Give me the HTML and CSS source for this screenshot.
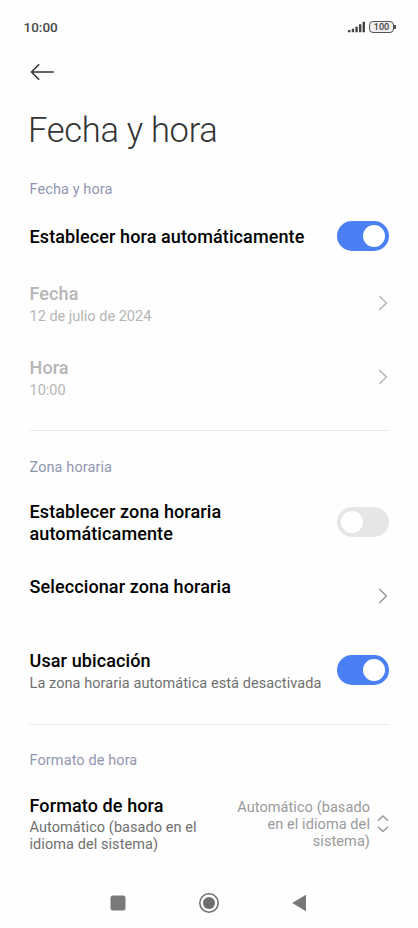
FILE: index.html
```html
<!DOCTYPE html>
<html lang="es">
<head>
<meta charset="utf-8">
<title>Fecha y hora</title>
<link rel="stylesheet" href="styles.css">
</head>
<body>
<div class="status">
  <span class="clock">10:00</span>
  <svg class="signal" width="18" height="12" viewBox="0 0 18 12"><path d="M0 9h2.4v2.3H0zM3.7 7.7h2.4v3.6H3.7zM7.4 5.7h2.4v5.6H7.4zM11 3.2h2.4v8.1H11zM14.6.8H17v10.5h-2.4z" fill="#444"/></svg>
  <span class="battery">100</span>
</div>
<header class="bar">
  <svg width="26" height="18" viewBox="0 0 26 18" fill="none" stroke="#333" stroke-width="1.6" stroke-linecap="round" stroke-linejoin="round"><path d="M24.2 9H2.500M9.700 1.7 2.500 9l7.200 7.2"/></svg>
</header>
<h1>Fecha y hora</h1>
<main>
  <section>
    <h2>Fecha y hora</h2>
    <div class="row short">
      <div class="text"><div class="name">Establecer hora automáticamente</div></div>
      <span class="switch on"></span>
    </div>
    <div class="row disabled">
      <div class="text"><div class="name">Fecha</div><div class="sub">12 de julio de 2024</div></div>
      <svg class="chevron" width="10" height="16" viewBox="0 0 10 16"><path d="M1.2 1 8.400 8l-7.200 7"/></svg>
    </div>
    <div class="row disabled">
      <div class="text"><div class="name">Hora</div><div class="sub">10:00</div></div>
      <svg class="chevron" width="10" height="16" viewBox="0 0 10 16"><path d="M1.2 1 8.400 8l-7.200 7"/></svg>
    </div>
  </section>
  <section>
    <h2>Zona horaria</h2>
    <div class="row zone">
      <div class="text"><div class="name">Establecer zona horaria automáticamente</div></div>
      <span class="switch"></span>
    </div>
    <div class="row">
      <div class="text"><div class="name">Seleccionar zona horaria</div><div class="sub"></div></div>
      <svg class="chevron" width="10" height="16" viewBox="0 0 10 16"><path d="M1.2 1 8.400 8l-7.200 7"/></svg>
    </div>
    <div class="row">
      <div class="text"><div class="name">Usar ubicación</div><div class="sub">La zona horaria automática está desactivada</div></div>
      <span class="switch on"></span>
    </div>
  </section>
  <section>
    <h2>Formato de hora</h2>
    <div class="row format">
      <div class="text"><div class="name">Formato de hora</div><div class="sub">Automático (basado en el<br>idioma del sistema)</div></div>
      <div class="value">Automático (basado<br>en el idioma del<br>sistema)</div>
      <svg class="updown" width="12" height="18" viewBox="0 0 12 18"><path d="M1 5.700 6 1l5 4.700M1 11.800l5 4.700 5-4.700"/></svg>
    </div>
  </section>
</main>
<nav>
  <svg width="22" height="22" viewBox="0 0 22 22"><rect x="3.500" y="3.500" width="15" height="15" rx="2.500" fill="#7a7a7a"/></svg>
  <svg width="22" height="22" viewBox="0 0 22 22"><circle cx="11" cy="11" r="9.200" fill="none" stroke="#6e6e6e" stroke-width="1.500"/><circle cx="11" cy="11" r="6" fill="#6e6e6e"/></svg>
  <svg width="22" height="22" viewBox="0 0 22 22"><path d="M3.200 11 17 2.700v16.600z" fill="#777"/></svg>
</nav>
</body>
</html>
```
FILE: styles.css
```css
* { box-sizing: border-box; }
body {
  margin: 0;
  height: 928px;
  display: flex;
  flex-direction: column;
  background: #fefefe;
  color: #000;
  font-family: Roboto, sans-serif;
  overflow: hidden;
}
.status {
  height: 54px;
  padding: 0 22px 0 23.500px;
  display: flex;
  align-items: center;
}
.clock {
  flex: 1;
  font-size: 13.500px;
  font-weight: 500;
  color: #484848;
}
.signal { margin-right: 3px; }
.battery {
  position: relative;
  width: 25px;
  height: 12px;
  margin-right: 2px;
  border: 1.5px solid #555;
  border-radius: 4px;
  background: #eee;
  color: #444;
  font-size: 9px;
  font-weight: 500;
  line-height: 11px;
  text-align: center;
}
.battery::after {
  content: "";
  position: absolute;
  right: -3px;
  top: 3px;
  width: 2px;
  height: 4px;
  background: #555;
}
.bar {
  height: 36px;
  padding-left: 29px;
  display: flex;
  align-items: center;
}
h1 {
  margin: 0;
  height: 80px;
  padding-left: 28px;
  font-size: 34.500px;
  font-weight: 300;
  line-height: 80px;
  letter-spacing: -.3px;
  color: #333;
}
main {
  flex: 1;
  padding: 0 29px;
}
section + section { border-top: 1px solid #eaeaea; }
h2 {
  margin: 0;
  height: 36px;
  padding-left: .5px;
  font-size: 14.500px;
  font-weight: 400;
  line-height: 39px;
  letter-spacing: .1px;
  color: #9196b0;
}
section:first-child { height: 260px; }
section:nth-child(2) { height: 294px; }
section + section h2 {
  height: 54px;
  line-height: 18px;
  padding-top: 27px;
}
section:nth-child(2) h2 { padding-top: 28px; }
.row {
  height: 74px;
  display: flex;
  align-items: center;
  justify-content: space-between;
}
.text { padding: 2px 0 0 .5px; }
.short { height: 60px; }
.zone .text { width: 220px; padding-top: 1px; }
.name {
  font-size: 18px;
  font-weight: 500;
  line-height: 21.500px;
  letter-spacing: .11px;
}
.sub {
  min-height: 17.300px;
  margin-top: 3.200px;
  font-size: 14.500px;
  line-height: 17.300px;
  letter-spacing: .07px;
  color: #707070;
  white-space: nowrap;
}
.disabled .sub { letter-spacing: 0; }
.format .text { padding-top: 0; }
.format .sub { margin-top: 2.500px; }
.disabled .name, .disabled .sub { color: #b5b5b5; }
.switch {
  width: 52px;
  height: 30px;
  padding: 4px;
  display: flex;
  border-radius: 15px;
  background: #e6e6e6;
}
.switch::before {
  content: "";
  width: 22px;
  height: 22px;
  border-radius: 50%;
  background: #fff;
}
.on { background: #4a80f3; justify-content: flex-end; }
.chevron, .updown {
  fill: none;
  stroke: #999;
  stroke-width: 1.5;
}
.disabled .chevron { stroke: #b5b5b5; }
.chevron { margin-right: 1px; }
.format { height: 90px; }
.value {
  flex: 1;
  padding-top: 1px;
  font-size: 14.500px;
  line-height: 17.300px;
  letter-spacing: .08px;
  color: #9a9a9a;
  text-align: right;
}
.updown { margin-left: 7px; }
nav {
  height: 50px;
  padding: 0 107px;
  display: flex;
  align-items: center;
  justify-content: space-between;
}
```
